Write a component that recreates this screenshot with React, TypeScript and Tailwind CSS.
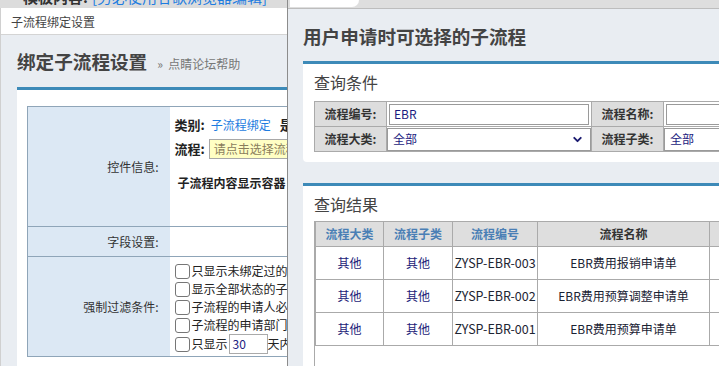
import React from "react";
import { ChevronDown } from "lucide-react";

const rows = [
    { big: "其他", sub: "其他", code: "ZYSP-EBR-003", name: "EBR费用报销申请单" },
    { big: "其他", sub: "其他", code: "ZYSP-EBR-002", name: "EBR费用预算调整申请单" },
    { big: "其他", sub: "其他", code: "ZYSP-EBR-001", name: "EBR费用预算申请单" },
];

const filters = [
    "只显示未绑定过的子流程",
    "显示全部状态的子流程",
    "子流程的申请人必须是当前用户",
    "子流程的申请部门必须是当前部门",
];

function Check() {
    return <span className="inline-block w-[15px] h-[15px] shrink-0 rounded-[3px] border border-[#767676] bg-white mr-[2px]" />;
}

function LeftWindow() {
    return (
        <div className="absolute left-0 top-[8px] w-[430px] h-[358px] flex flex-col bg-[#e9edf2] border-l border-[#d0d0d0]">
            <div className="h-[27px] shrink-0 flex items-center px-[10px] pt-[1px] bg-white border-b border-[#d4d4d4] text-[12px] text-[#444]">
                子流程绑定设置
            </div>
            <div className="flex-1 flex flex-col pl-[16px]">
                <div className="mt-[14px] flex items-baseline">
                    <h2 className="text-[18.6px] leading-[24px] font-bold text-[#444]">绑定子流程设置</h2>
                    <span className="ml-[10px] text-[12px] text-[#777]">»&nbsp;&nbsp;点睛论坛帮助</span>
                </div>
                <div className="mt-[14px] flex-1 bg-white border-t-[3px] border-[#3d8ab8] pl-[10px] pt-[16px]">
                    <table className="w-[400px] border-collapse border border-[#8fa5b8] text-[12px]">
                        <tbody>
                            <tr className="h-[120px] border-b border-[#8fa5b8]">
                                <td className="w-[142px] bg-[#dce8f4] text-right pr-[11px] align-middle text-[#333]">控件信息:</td>
                                <td className="align-top pl-[5px] pt-[9px]">
                                    <div className="h-[18px] flex items-center whitespace-nowrap">
                                        <span className="font-bold text-[13px] text-[#222]">类别:</span>
                                        <span className="ml-[6px] text-[#1e7ce0]">子流程绑定</span>
                                        <span className="ml-[9px] font-bold text-[13px] text-[#222]">是否必填:</span>
                                    </div>
                                    <div className="mt-[5px] h-[20px] flex items-center whitespace-nowrap">
                                        <span className="font-bold text-[13px] text-[#222]">流程:</span>
                                        <span className="ml-[4px] h-[20px] w-[180px] flex items-center px-[4px] bg-[#ffffc4] border border-[#a8a8a8] text-[#8a7d5c]">请点击选择流程</span>
                                    </div>
                                    <div className="mt-[15px] h-[18px] flex items-center pl-[3px] font-bold text-[#222]">
                                        子流程内容显示容器
                                    </div>
                                </td>
                            </tr>
                            <tr className="h-[30px] border-b border-[#8fa5b8]">
                                <td className="bg-[#dce8f4] text-right pr-[11px] text-[#333]">字段设置:</td>
                                <td />
                            </tr>
                            <tr className="h-[100px]">
                                <td className="bg-[#dce8f4] text-right pr-[11px] text-[#333]">强制过滤条件:</td>
                                <td className="align-top pl-[5px] pt-[5px] text-[#222]">
                                    {filters.map((f) => (
                                        <div key={f} className="h-[18px] flex items-center whitespace-nowrap">
                                            <Check />
                                            {f}
                                        </div>
                                    ))}
                                    <div className="h-[20px] flex items-center whitespace-nowrap">
                                        <Check />
                                        只显示
                                        <span className="ml-[1px] w-[39px] h-[20px] flex items-center px-[3px] border border-[#aaa] text-[#1a1a80]">30</span>
                                        天内的子流程
                                    </div>
                                </td>
                            </tr>
                        </tbody>
                    </table>
                </div>
            </div>
        </div>
    );
}

function RightWindow() {
    const head = "h-[25px] bg-[#dedede] border border-[#aaa] font-bold";
    const cell = "border border-[#aaa] text-center";
    return (
        <div className="absolute left-[287px] top-0 w-[440px] h-[366px] flex flex-col bg-[#e9edf2] border-l border-[#8c8c8c]">
            <div className="h-[9px] shrink-0 flex bg-[#dedede] border-b border-[#bdbdbd]">
                <div className="ml-[2px] w-[69px] h-[7px] bg-white rounded-br-[8px]" />
            </div>
            <div className="flex-1 flex flex-col pl-[15px]">
                <h2 className="mt-[15px] text-[18.6px] leading-[24px] font-bold text-[#444]">用户申请时可选择的子流程</h2>

                <div className="mt-[13px] bg-white border-t-[3px] border-[#3d8ab8] rounded-b-[4px] pl-[11px] pt-[8px] pb-[10px]">
                    <div className="text-[16px] leading-[20px] text-[#444]">查询条件</div>
                    <table className="mt-[9px] w-[420px] border-collapse text-[12px]">
                        <tbody>
                            <tr className="h-[25px]">
                                <td className="w-[72px] bg-[#dddddd] border border-[#aaa] text-center font-bold text-[#333]">流程编号:</td>
                                <td className="w-[205px] border border-[#aaa] px-[2px]">
                                    <div className="h-[21px] flex items-center px-[4px] border border-[#9a9a9a] text-[#1a1a80]">EBR</div>
                                </td>
                                <td className="w-[72px] bg-[#dddddd] border border-[#aaa] text-center font-bold text-[#333]">流程名称:</td>
                                <td className="border border-[#aaa] px-[2px]">
                                    <div className="h-[21px] border border-[#9a9a9a]" />
                                </td>
                            </tr>
                            <tr className="h-[25px]">
                                <td className="bg-[#dddddd] border border-[#aaa] text-center font-bold text-[#333]">流程大类:</td>
                                <td className="border border-[#aaa]">
                                    <div className="h-[23px] flex items-center justify-between pl-[5px] pr-[6px] border border-[#9a9a9a] text-[#1a1a80]">
                                        全部
                                        <ChevronDown size={13} strokeWidth={3.5} color="#1a1a70" />
                                    </div>
                                </td>
                                <td className="bg-[#dddddd] border border-[#aaa] text-center font-bold text-[#333]">流程子类:</td>
                                <td className="border border-[#aaa]">
                                    <div className="h-[23px] flex items-center pl-[5px] border border-[#9a9a9a] text-[#1a1a80]">全部</div>
                                </td>
                            </tr>
                        </tbody>
                    </table>
                </div>

                <div className="mt-[21px] flex-1 flex flex-col bg-white border-t-[3px] border-[#3d8ab8] pl-[11px] pt-[8px]">
                    <div className="text-[16px] leading-[20px] text-[#444]">查询结果</div>
                    <div className="mt-[7px] flex-1 border-l border-[#aaa]">
                        <table className="w-[460px] border-collapse text-[12px] text-center">
                            <thead>
                                <tr>
                                    <th className={`${head} w-[68px] text-[#4a7fb5]`}>流程大类</th>
                                    <th className={`${head} w-[69px] text-[#4a7fb5]`}>流程子类</th>
                                    <th className={`${head} w-[85px] text-[#4a7fb5]`}>流程编号</th>
                                    <th className={`${head} w-[172px] text-[#333]`}>流程名称</th>
                                    <th className={head} />
                                </tr>
                            </thead>
                            <tbody>
                                {rows.map((r) => (
                                    <tr key={r.code} className="h-[33px]">
                                        <td className={`${cell} text-[#1c1c78]`}>{r.big}</td>
                                        <td className={`${cell} text-[#1c1c78]`}>{r.sub}</td>
                                        <td className={`${cell} text-[12.5px] text-[#1e2533] whitespace-nowrap`}>{r.code}</td>
                                        <td className={`${cell} text-[#1a2233]`}>{r.name}</td>
                                        <td className={cell} />
                                    </tr>
                                ))}
                            </tbody>
                        </table>
                    </div>
                </div>
            </div>
        </div>
    );
}

export default function App() {
    return (
        <div className="relative w-[719px] h-[366px] overflow-hidden bg-[#dcdcdc] font-['Noto_Sans_CJK_SC',sans-serif] text-[12px] text-[#333]">
            <div className="absolute left-[16px] top-[-12px] text-[15px] leading-[18px] whitespace-nowrap">
                <span className="text-[#e00000]">*</span>
                <span className="font-bold text-[#333]">模板内容:</span>
                <span className="ml-[4px] text-[#1e7ce0]">[务必使用谷歌浏览器编辑]</span>
            </div>
            <LeftWindow />
            <RightWindow />
        </div>
    );
}
